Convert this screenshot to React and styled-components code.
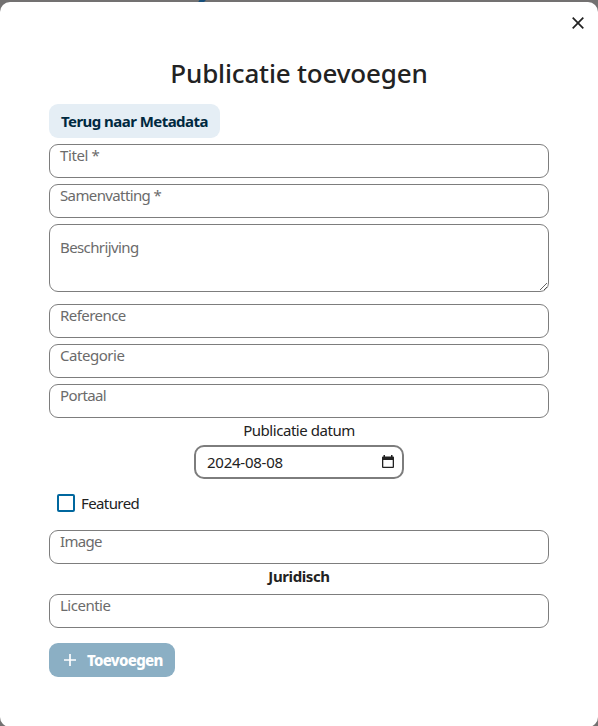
import React from "react";
import styled, { createGlobalStyle } from "styled-components";

const GlobalStyle = createGlobalStyle`
  * { box-sizing: border-box; }
  body {
    margin: 0;
    background: #737171;
    color: #222;
    font: 15px/20px "Noto Sans", "Open Sans", sans-serif;
    overflow: hidden;
  }
  button, input, textarea { font: inherit; }
`;

const Page = styled.div`
  height: 726px;
  padding-top: 2px;
  overflow: hidden;
`;

const BackdropMark = styled.svg`
  position: absolute;
  top: 0;
  left: 197px;
`;

const Dialog = styled.main`
  position: relative;
  height: 725px;
  padding: 53px 49px 0;
  background: #fff;
  border-radius: 10px;
`;

const CloseButton = styled.button`
  position: absolute;
  top: 9px;
  right: 8px;
  width: 24px;
  height: 24px;
  padding: 0;
  border: 0;
  background: none;
  color: #222;
  svg { display: block; }
`;

const Title = styled.h2`
  margin: 0;
  height: 49px;
  font-size: 26px;
  line-height: 36px;
  font-weight: 500;
  text-align: center;
  letter-spacing: ${(p) => p.$spacing};
`;

const Form = styled.form`
  width: 500px;
  display: flex;
  flex-direction: column;
`;

const Button = styled.button`
  align-self: flex-start;
  display: flex;
  align-items: center;
  width: ${(p) => p.$width};
  height: 34px;
  margin-top: ${(p) => p.$top || "0"};
  padding: 0 0 1px 12px;
  border: 0;
  border-radius: 9px;
  font-weight: ${(p) => (p.$primary ? 800 : 700)};
  white-space: nowrap;
  letter-spacing: ${(p) => p.$spacing};
  color: ${(p) => (p.$primary ? "#fff" : "#00293f")};
  background: ${(p) => (p.$primary ? "#8bafc4" : "#e5eef5")};
  svg { margin: 1px 5px 0 -3px; flex: none; }
`;

const Field = styled.label`
  position: relative;
  display: block;
  height: ${(p) => (p.$tall ? "68px" : "34px")};
  margin-top: ${(p) => p.$top || "6px"};
`;

const FieldLabel = styled.span`
  position: absolute;
  left: 11px;
  top: ${(p) => (p.$tall ? "13px" : "1px")};
  color: #6b6b6b;
  letter-spacing: ${(p) => p.$spacing};
  pointer-events: none;
`;

const TextInput = styled.input`
  display: block;
  width: 100%;
  height: 100%;
  padding: 0 10px;
  border: 1px solid #7d7d7d;
  border-radius: 9px;
  background: #fff;
  outline: none;
`;

const TextArea = styled(TextInput).attrs({ as: "textarea" })`
  resize: vertical;
`;

const Caption = styled.div`
  height: 20px;
  margin-top: ${(p) => p.$top};
  text-align: center;
  font-weight: ${(p) => (p.$bold ? 700 : 400)};
  letter-spacing: ${(p) => p.$spacing};
`;

const DateField = styled.div`
  align-self: center;
  display: flex;
  align-items: center;
  justify-content: space-between;
  width: 210px;
  height: 34px;
  margin-top: 5px;
  padding: 0 8px 1px 11px;
  border: 2px solid #7d7d7d;
  border-radius: 10px;
  letter-spacing: -0.25px;
`;

const CheckRow = styled.label`
  display: flex;
  align-items: center;
  height: 20px;
  margin: 14px 0 0 8px;
  letter-spacing: -0.6px;
`;

const CheckBox = styled.input`
  appearance: none;
  width: 18px;
  height: 18px;
  margin: 0 6px 0 0;
  border: 2px solid #00679e;
  border-radius: 2px;
`;

function InputField({ label, spacing, top, tall }) {
  return (
    <Field $top={top} $tall={tall}>
      {tall ? <TextArea /> : <TextInput />}
      <FieldLabel $tall={tall} $spacing={spacing}>{label}</FieldLabel>
    </Field>
  );
}

export default function App() {
  return (
    <Page>
      <GlobalStyle />
      <BackdropMark width="10" height="2">
        <path d="M1 2.5 2.5 0H9L6.5 2.5Z" fill="#174f7b" />
      </BackdropMark>
      <Dialog>
        <CloseButton aria-label="Sluiten" type="button">
          <svg width="24" height="24" viewBox="0 0 24 24" fill="none" stroke="currentColor" strokeWidth="1.7">
            <path d="M6.7 6.7 17.3 17.3M17.3 6.7 6.7 17.3" />
          </svg>
        </CloseButton>
        <Title $spacing="-0.17px">Publicatie toevoegen</Title>
        <Form>
          <Button type="button" $width="171px" $spacing="-0.55px">Terug naar Metadata</Button>
          <InputField label="Titel *" spacing="-0.4px" />
          <InputField label="Samenvatting *" spacing="-0.62px" />
          <InputField label="Beschrijving" spacing="-0.6px" tall />
          <InputField label="Reference" spacing="-0.55px" top="12px" />
          <InputField label="Categorie" spacing="-0.45px" />
          <InputField label="Portaal" spacing="-0.62px" />
          <Caption $top="2px" $spacing="-0.45px">Publicatie datum</Caption>
          <DateField>
            <span>2024-08-08</span>
            <svg width="12" height="14" viewBox="0 0 12 14">
              <path d="M1.5 0h1.5v1.5h6V0h1.5v1.5h.5a1 1 0 0 1 1 1V12a1 1 0 0 1-1 1H1a1 1 0 0 1-1-1V2.5a1 1 0 0 1 1-1h.5ZM1.3 5v6.7h9.4V5Z" fill="#222" fillRule="evenodd" />
            </svg>
          </DateField>
          <CheckRow>
            <CheckBox type="checkbox" />
            <span>Featured</span>
          </CheckRow>
          <InputField label="Image" spacing="-0.7px" top="17px" />
          <Caption $top="2px" $bold $spacing="-0.4px">Juridisch</Caption>
          <InputField label="Licentie" spacing="-0.5px" top="8px" />
          <Button type="button" $width="126px" $top="15px" $spacing="-0.7px" $primary>
            <svg width="24" height="24" viewBox="0 0 24 24" fill="none" stroke="currentColor" strokeWidth="1.7">
              <path d="M6 12h12M12 6v12" />
            </svg>
            <span>Toevoegen</span>
          </Button>
        </Form>
      </Dialog>
    </Page>
  );
}
